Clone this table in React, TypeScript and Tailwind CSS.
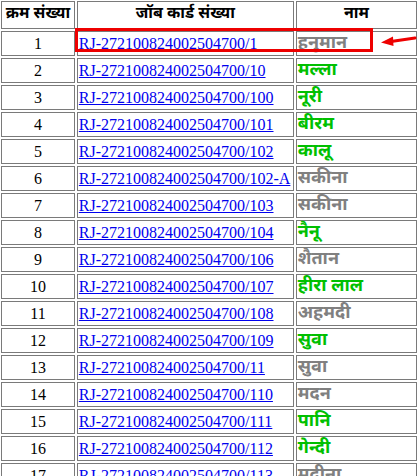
import React from "react";

const rows: [string, string, "g" | "n"][] = [
  ["1", "RJ-272100824002504700/1", "हनुमान", "g"],
  ["2", "RJ-272100824002504700/10", "मल्ला", "n"],
  ["3", "RJ-272100824002504700/100", "नूरी", "n"],
  ["4", "RJ-272100824002504700/101", "बीरम", "n"],
  ["5", "RJ-272100824002504700/102", "कालू", "n"],
  ["6", "RJ-272100824002504700/102-A", "सकीना", "g"],
  ["7", "RJ-272100824002504700/103", "सकीना", "g"],
  ["8", "RJ-272100824002504700/104", "नैनू", "n"],
  ["9", "RJ-272100824002504700/106", "शैतान", "g"],
  ["10", "RJ-272100824002504700/107", "हीरा लाल", "n"],
  ["11", "RJ-272100824002504700/108", "अहमदी", "g"],
  ["12", "RJ-272100824002504700/109", "सुवा", "n"],
  ["13", "RJ-272100824002504700/11", "सुवा", "g"],
  ["14", "RJ-272100824002504700/110", "मदन", "g"],
  ["15", "RJ-272100824002504700/111", "पानि", "n"],
  ["16", "RJ-272100824002504700/112", "गेन्दी", "n"],
  ["17", "RJ-272100824002504700/113", "मदीना", "g"],
] as any;

const deva = "font-['Noto_Sans_Devanagari','Lohit_Devanagari','Noto_Sans',sans-serif]";

export default function App() {
  return (
    <div className="relative w-[419px] h-[476px] overflow-hidden bg-white font-['Liberation_Serif',serif] text-[16px] text-black">
      <table className="-ml-px -mt-px border-separate border-spacing-[2px] table-fixed">
        <thead>
          <tr className="h-[25px]">
            <th className={`w-[75px] border border-[#7a7a7a] p-px text-[16px] font-bold ${deva}`}>क्रम संख्या</th>
            <th className={`w-[217px] border border-[#7a7a7a] p-px text-[16px] font-bold ${deva}`}>जॉब कार्ड संख्या</th>
            <th className={`w-[123px] border border-[#7a7a7a] p-px text-[16px] font-bold ${deva}`}>नाम</th>
          </tr>
        </thead>
        <tbody>
          {rows.map((r: any) => (
            <tr key={r[0]} className="h-[25px]">
              <td className="border border-[#7a7a7a] p-px text-center leading-[21px]">{r[0]}</td>
              <td className="border border-[#7a7a7a] p-px leading-[21px] whitespace-nowrap">
                <a href="#" className="text-[#0000ee] underline">{r[1]}</a>
              </td>
              <td className={`border border-[#7a7a7a] p-px leading-[21px] text-[18px] font-bold whitespace-nowrap ${deva} ${r[3] === "g" ? "text-[#808080]" : "text-[#00c000]"}`}>
                {r[2]}
              </td>
            </tr>
          ))}
        </tbody>
      </table>
      <div className="absolute left-[75px] top-[28px] w-[298px] h-[24px] border-[3px] border-[#ee0000]" />
      <svg className="absolute left-[379px] top-[33px]" width="40" height="16" viewBox="0 0 40 16">
        <path d="M36 5 L12 8.5" stroke="#ee0000" strokeWidth="3" strokeLinecap="round" />
        <path d="M2 9.5 L14 3.5 L14.5 13 Z" fill="#ee0000" />
      </svg>
    </div>
  );
}
